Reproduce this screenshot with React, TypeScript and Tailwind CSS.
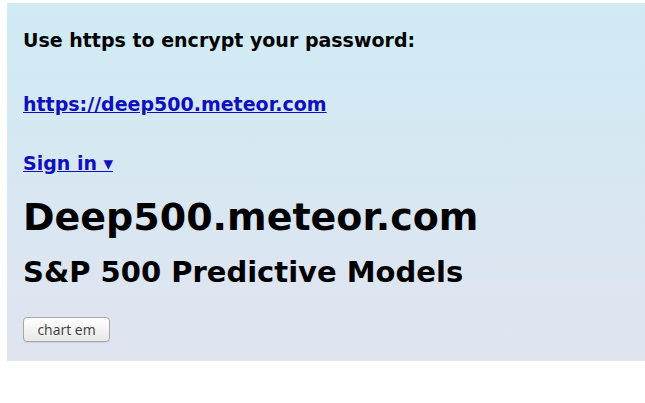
import * as React from 'react'

export default function App() {
  return (
    <div className="min-h-[403px] bg-white pt-[3px] pl-[7px] font-['DejaVu_Sans',sans-serif] text-black">
      <div className="flex h-[358px] flex-col items-start bg-gradient-to-b from-[#cfebf4] to-[#e0e4f0] px-4 pt-[26px]">
        <h4 className="text-[19px] font-bold leading-[22px]">
          Use https to encrypt your password:
        </h4>
        <a
          href="https://deep500.meteor.com"
          className="mt-[42px] text-[19px] font-bold leading-[22px] text-[#0f0fbf] underline"
        >
          https://deep500.meteor.com
        </a>
        <a href="#" className="mt-[37px] text-[19px] font-bold leading-[22px] text-[#0f0fbf] underline">
          Sign in ▾
        </a>
        <h1 className="mt-[21px] text-[38px] font-bold leading-[44px]">Deep500.meteor.com</h1>
        <h2 className="mt-[16px] text-[29px] font-bold leading-[34px]">S&amp;P 500 Predictive Models</h2>
        <button className="mt-[28px] h-[25px] w-[87px] rounded-[4px] border border-[#a8a8a8] bg-gradient-to-b from-white to-[#e8e8e8] font-['Open_Sans',sans-serif] text-[14px] text-[#3c3c3c] shadow-[0_1px_1px_rgba(0,0,0,0.08)]">
          chart em
        </button>
      </div>
    </div>
  )
}
